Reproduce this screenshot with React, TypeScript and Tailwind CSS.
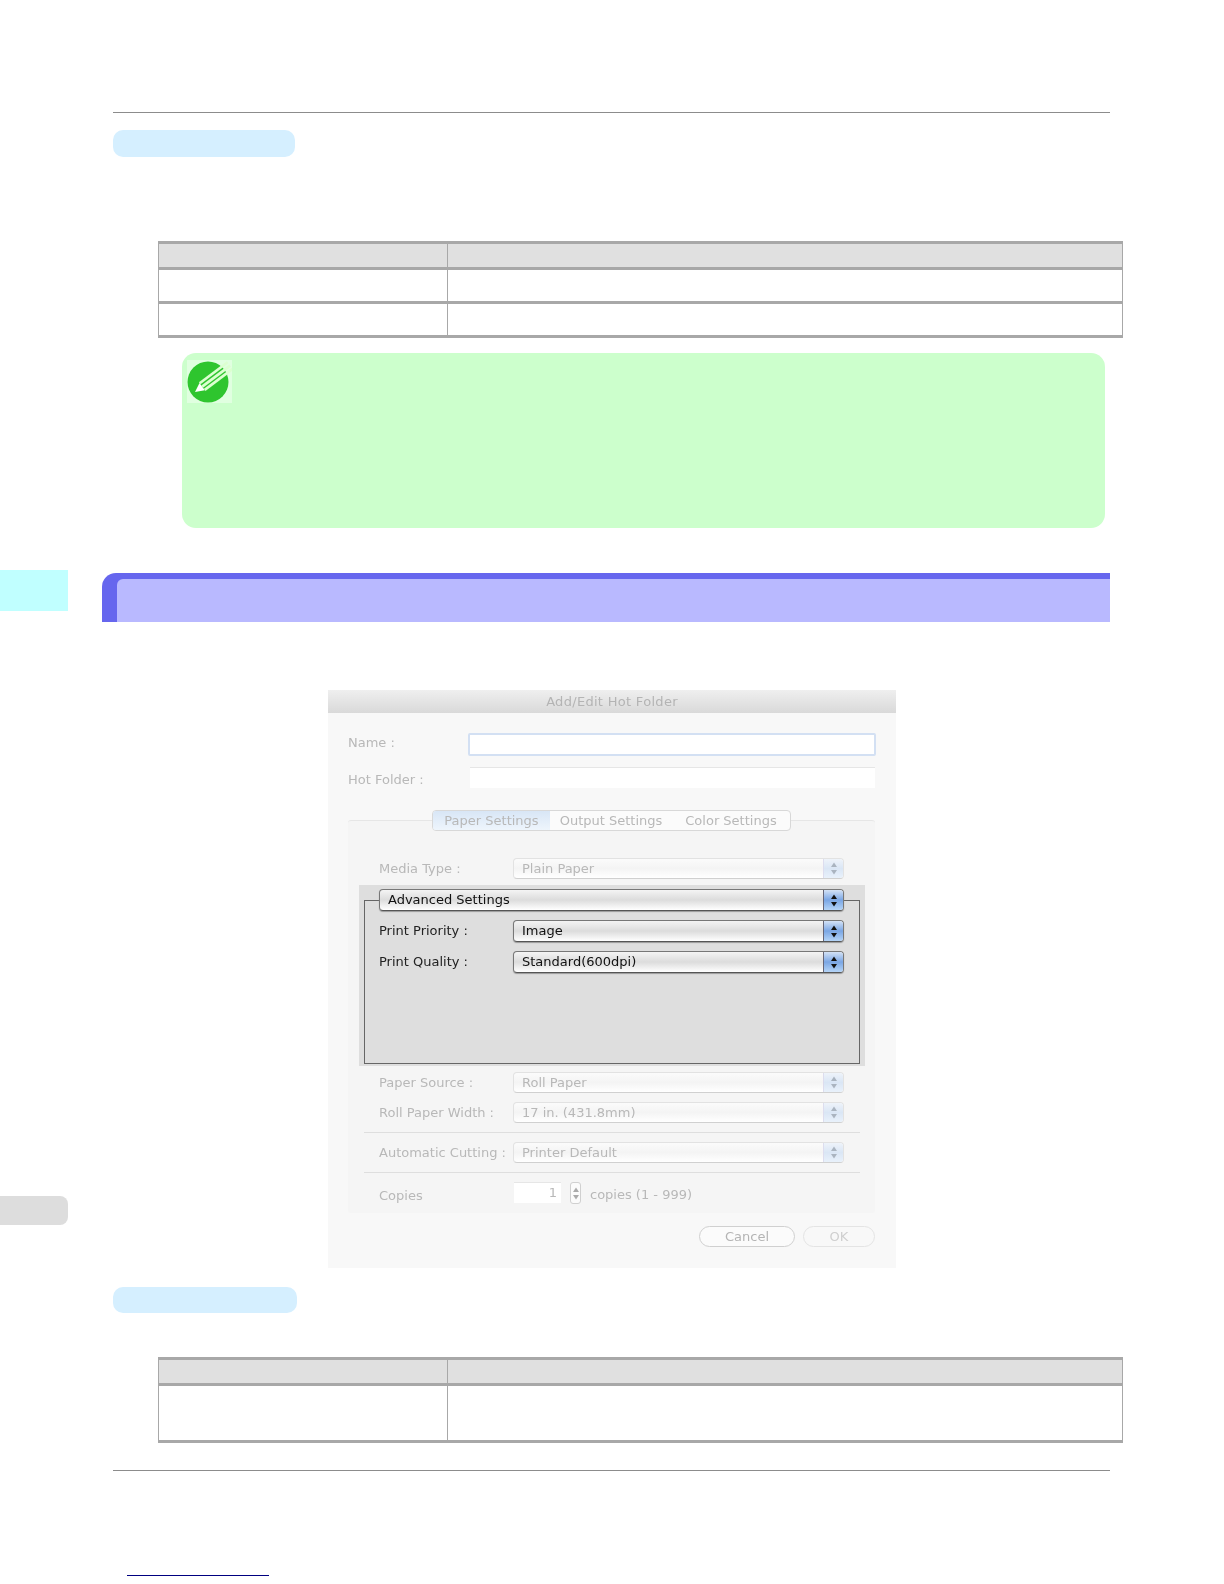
import React from "react";

const DIALOG_FONT = "font-['DejaVu_Sans',sans-serif]";

function Arrows({ color }: { color: string }) {
  return (
    <svg width="8" height="13" viewBox="0 0 8 13" fill={color}>
      <path d="M4 0.5 L7 5 L1 5 Z" />
      <path d="M4 12.5 L7 8 L1 8 Z" />
    </svg>
  );
}

function Popup({ text, active = false, wide = false }: { text: string; active?: boolean; wide?: boolean }) {
  if (active) {
    return (
      <div className={`flex h-[22px] overflow-hidden rounded-[4px] border border-[#777] border-b-[#555] bg-gradient-to-b from-[#f4f4f4] via-[#dcdcdc] to-white shadow-[0_1px_1px_#999] ${wide ? "w-[465px]" : "w-[331px]"}`}>
        <span className="flex-1 pl-2 text-[13px] leading-[20px] text-[#111]">{text}</span>
        <span className="flex w-[20px] items-center justify-center border-l border-[#667] bg-gradient-to-b from-[#d4e2f5] via-[#7aa6e4] to-[#b4d4f7]">
          <Arrows color="#111" />
        </span>
      </div>
    );
  }
  return (
    <div className="flex h-[21px] w-[331px] overflow-hidden rounded-[4px] border border-[#e2e2e2] border-b-[#d0d0d0] bg-gradient-to-b from-[#fbfbfb] via-[#f4f4f4] to-white">
      <span className="flex-1 pl-2 text-[13px] leading-[19px] text-[#b8b8b8]">{text}</span>
      <span className="flex w-[20px] items-center justify-center border-l border-[#dde] bg-gradient-to-b from-[#eef3fa] via-[#dae6f5] to-[#e8f1fb]">
        <Arrows color="#aab4c0" />
      </span>
    </div>
  );
}

function Row({ label, text, active = false }: { label: string; text: string; active?: boolean }) {
  return (
    <div className="flex items-center pl-[31px]">
      <span className={`w-[134px] text-[13px] ${active ? "text-[#222]" : "text-[#b8b8b8]"}`}>{label}</span>
      <Popup text={text} active={active} />
    </div>
  );
}

function DocTable({ rowHeights }: { rowHeights: string[] }) {
  return (
    <div className="ml-[45px] w-[965px] border-x border-t-[3px] border-[#a8a8a8]">
      <div className="flex h-[26px] border-b-[3px] border-[#a8a8a8] bg-[#e0e0e0]">
        <div className="w-[289px] border-r border-[#a8a8a8]" />
        <div className="flex-1" />
      </div>
      {rowHeights.map((h, i) => (
        <div key={i} className={`flex border-b-[3px] border-[#a8a8a8] ${h}`}>
          <div className="w-[289px] border-r border-[#a8a8a8]" />
          <div className="flex-1" />
        </div>
      ))}
    </div>
  );
}

function NoteIcon() {
  return (
    <div className="ml-[5px] mt-[7px] h-[43px] w-[45px] bg-[#e0ffe0] blur-[0.4px]">
      <svg width="45" height="43" viewBox="0 0 45 43">
        <circle cx="21" cy="22" r="20.5" fill="#2ec52e" />
        <g transform="rotate(-37 8 32)">
          <path d="M8 32 L17 27.5 L17 36.5 Z" fill="#fff" />
          <path d="M17 26.5 H52 V29.2 H17 Z" fill="#dcffd0" />
          <path d="M17 30.6 H52 V33.4 H17 Z" fill="#dcffd0" />
          <path d="M17 34.8 H52 V37.5 H17 Z" fill="#dcffd0" />
        </g>
      </svg>
    </div>
  );
}

function HotFolderDialog() {
  return (
    <div className={`ml-[215px] mt-[68px] h-[578px] w-[568px] bg-[#f8f8f8] blur-[0.4px] ${DIALOG_FONT}`}>
      <div className="h-[23px] bg-gradient-to-b from-[#efefef] to-[#d9d9d9] text-center text-[13px] leading-[23px] tracking-[0.3px] text-[#b4b4b4]">
        Add/Edit Hot Folder
      </div>

      <div className="mt-[20px] flex pl-[20px]">
        <span className="w-[120px] text-[13px] leading-[19px] text-[#b8b8b8]">Name :</span>
        <div className="h-[23px] w-[408px] rounded-[2px] border-2 border-[#d3e0f3] bg-white" />
      </div>
      <div className="mt-[11px] flex h-[21px] pl-[20px]">
        <span className="w-[122px] pt-[3px] text-[13px] leading-[20px] text-[#b8b8b8]">Hot Folder :</span>
        <div className="h-[21px] w-[405px] border-t border-[#e6e6e6] bg-white" />
      </div>

      <div className="ml-[20px] mt-[32px] h-[393px] w-[527px] rounded-[3px] border-t border-[#e6e6e6] bg-[#f5f5f5]">
        <div className="relative z-10 -mt-[11px] ml-[84px] flex h-[21px] w-[359px] overflow-hidden rounded-[4px] border border-[#d8d8d8] bg-[#fbfbfb] text-[13px] leading-[19px] text-[#b8b8b8]">
          <span className="w-[117px] bg-gradient-to-b from-[#d8e6f6] to-[#eef5fc] text-center">Paper Settings</span>
          <span className="w-[122px] text-center">Output Settings</span>
          <span className="flex-1 text-center">Color Settings</span>
        </div>

        <div className="mt-[27px]">
          <Row label="Media Type :" text="Plain Paper" />
        </div>

        <div className="ml-[11px] mt-[6px] h-[181px] w-[506px] overflow-hidden bg-[#dedede] pt-[4px]">
          <div className="relative z-10 ml-[20px]">
            <Popup text="Advanced Settings" active wide />
          </div>
          <div className="-mt-[11px] ml-[5px] h-[164px] w-[496px] border border-[#666] pt-[19px]">
            <div className="-ml-[17px]">
              <Row label="Print Priority :" text="Image" active />
            </div>
            <div className="-ml-[17px] mt-[9px]">
              <Row label="Print Quality :" text="Standard(600dpi)" active />
            </div>
          </div>
        </div>

        <div className="mt-[6px]">
          <Row label="Paper Source :" text="Roll Paper" />
        </div>
        <div className="mt-[9px]">
          <Row label="Roll Paper Width :" text="17 in. (431.8mm)" />
        </div>
        <div className="ml-[16px] mt-[9px] h-px w-[496px] bg-[#dedede]" />
        <div className="mt-[9px]">
          <Row label="Automatic Cutting :" text="Printer Default" />
        </div>
        <div className="ml-[16px] mt-[9px] h-px w-[496px] bg-[#dedede]" />

        <div className="mt-[9px] flex pl-[31px]">
          <span className="w-[135px] pt-[3px] text-[13px] leading-[21px] text-[#b8b8b8]">Copies</span>
          <div className="h-[21px] w-[47px] border-t border-[#e6e6e6] bg-white pr-[4px] text-right text-[13px] leading-[20px] text-[#b8b8b8]">
            1
          </div>
          <div className="ml-[9px] flex h-[22px] w-[11px] items-center justify-center rounded-[3px] border border-[#d0d0d0] bg-[#fbfbfb]">
            <Arrows color="#aaa" />
          </div>
          <span className="ml-[9px] pt-[3px] text-[13px] leading-[19px] text-[#b8b8b8]">copies (1 - 999)</span>
        </div>
      </div>

      <div className="mt-[13px] flex pl-[371px] text-center text-[13px] leading-[19px] text-[#b4b4b4]">
        <div className="h-[21px] w-[96px] rounded-full border border-[#d0d0d0] bg-[#fbfbfb]">Cancel</div>
        <div className="ml-[8px] h-[21px] w-[72px] rounded-full border border-[#e4e4e4] text-[#cfcfcf]">OK</div>
      </div>
    </div>
  );
}

export default function App() {
  return (
    <div className="flex h-[1584px] w-[1224px] overflow-hidden bg-white">
      <div className="w-[68px] shrink-0">
        <div className="mt-[570px] h-[41px] bg-[#c0ffff]" />
        <div className="mt-[585px] h-[29px] rounded-r-[8px] bg-[#dddddd]" />
      </div>

      <main className="ml-[45px] w-[1011px]">
        <div className="mt-[112px] h-px w-[997px] bg-[#8c8c8c]" />
        <div className="mt-[17px] h-[27px] w-[182px] rounded-[10px] bg-[#d5efff]" />
        <div className="mt-[84px]">
          <DocTable rowHeights={["h-[34px]", "h-[34px]"]} />
        </div>

        <div className="ml-[69px] mt-[15px] h-[175px] w-[923px] overflow-hidden rounded-[14px] bg-[#ccffcc]">
          <NoteIcon />
        </div>

        <div className="-ml-[11px] mt-[45px] h-[49px] w-[1008px] rounded-tl-[14px] bg-[#6666ee] pl-[15px] pt-[6px]">
          <div className="h-full rounded-tl-[6px] bg-[#b9b9ff]" />
        </div>

        <HotFolderDialog />

        <div className="mt-[19px] h-[26px] w-[184px] rounded-[10px] bg-[#d5efff]" />
        <div className="mt-[44px]">
          <DocTable rowHeights={["h-[57px]"]} />
        </div>
        <div className="mt-[27px] h-px w-[997px] bg-[#8c8c8c]" />
        <div className="ml-[14px] mt-[104px] h-px w-[142px] bg-[#000080]" />
      </main>
    </div>
  );
}
